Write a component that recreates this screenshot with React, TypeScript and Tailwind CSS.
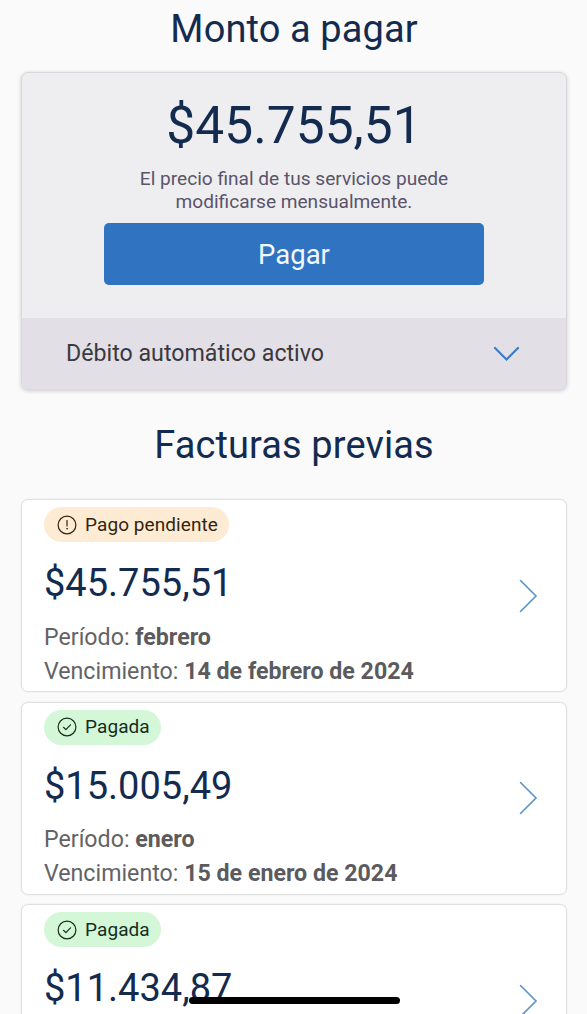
type Status = "pending" | "paid";

interface Invoice {
  status: Status;
  amount: string;
  period?: string;
  due?: string;
}

const invoices: Invoice[] = [
  { status: "pending", amount: "$45.755,51", period: "febrero", due: "14 de febrero de 2024" },
  { status: "paid", amount: "$15.005,49", period: "enero", due: "15 de enero de 2024" },
  { status: "paid", amount: "$11.434,87" },
];

function StatusIcon({ status }: { status: Status }) {
  return (
    <svg
      className="size-5 shrink-0"
      viewBox="0 0 20 20"
      fill="none"
      stroke="currentColor"
      strokeWidth="1.2"
      strokeLinecap="round"
      strokeLinejoin="round"
    >
      <circle cx="10" cy="10" r="8.9" />
      {status === "pending" ? (
        <>
          <path d="M10 5.5v5.4" />
          <circle cx="10" cy="13.7" r="0.5" fill="currentColor" strokeWidth="0.6" />
        </>
      ) : (
        <path d="M6.5 10.3l2.4 2.3 4.6-4.8" />
      )}
    </svg>
  );
}

function StatusBadge({ status }: { status: Status }) {
  const pending = status === "pending";
  return (
    <div
      className={`flex h-[35px] w-fit items-center gap-2 rounded-full pr-[11px] pl-[13px] text-[19px] tracking-[0.08px] ${
        pending ? "bg-[#fdecd3] text-[#33240f]" : "bg-[#d4f7d8] text-[#152d1b]"
      }`}
    >
      <StatusIcon status={status} />
      <span className="pt-px">{pending ? "Pago pendiente" : "Pagada"}</span>
    </div>
  );
}

function InvoiceCard({ invoice }: { invoice: Invoice }) {
  return (
    <article className="flex h-[193px] shrink-0 items-center justify-between rounded-[7px] border border-[#e0e0e1] bg-white pr-[28px] pl-[22px] shadow-[0_0_2px_rgba(0,0,0,0.08)]">
      <div className="h-full pt-[7px]">
        <StatusBadge status={invoice.status} />
        <p className="mt-[19px] text-[38px] leading-[44px] text-[#132b4f]">{invoice.amount}</p>
        <div className="mt-[14.5px] text-[23.2px] leading-[34px] whitespace-nowrap text-[#636366]">
          {invoice.period && (
            <p>
              Período: <strong className="font-bold text-[#5b5b5e]">{invoice.period}</strong>
            </p>
          )}
          {invoice.due && (
            <p>
              Vencimiento: <strong className="font-bold text-[#5b5b5e]">{invoice.due}</strong>
            </p>
          )}
        </div>
      </div>
      <svg className="h-[34px] w-[19px] shrink-0" viewBox="0 0 19 34" fill="none" stroke="#5b93cc" strokeWidth="1.6" strokeLinecap="round">
        <path d="M1.5 1.5L17 17L1.5 32.5" />
      </svg>
    </article>
  );
}

export default function App() {
  return (
    <div className="relative flex h-[1014px] w-[587px] flex-col overflow-hidden bg-[#fafafb] pr-5 pl-[21px] font-[Roboto,sans-serif]">
      <h1 className="mt-[6px] text-center text-[38px] leading-[46px] tracking-[0.1px] text-[#132b4f]">Monto a pagar</h1>

      <section className="mt-5 h-[318px] shrink-0 overflow-hidden rounded-[7px] border border-[#d9d9dc] bg-[#eeeef1] shadow-[0_1px_4px_rgba(0,0,0,0.18)]">
        <div className="flex h-[245px] flex-col items-center pt-[23px]">
          <p className="text-[51.5px] leading-[60px] text-[#132b4f]">$45.755,51</p>
          <p className="mt-[11px] text-center text-[19.1px] leading-[23px] text-[#595469]">
            El precio final de tus servicios puede
            <br />
            modificarse mensualmente.
          </p>
          <button className="mt-[10px] h-[62px] w-[380px] shrink-0 rounded-[5px] bg-[#3073c0] pt-px text-[27.5px] text-[#f3faff]">Pagar</button>
        </div>
        <button className="flex h-[71px] w-full items-center justify-between bg-[#e2e0e6] pr-[46px] pl-[44px] text-[23.2px] text-[#3b383e]">
          <span>Débito automático activo</span>
          <svg className="h-4 w-[27px]" viewBox="0 0 27 16" fill="none" stroke="#3b7cc4" strokeWidth="2.2" strokeLinecap="round">
            <path d="M2 2L13.5 13.5L25 2" />
          </svg>
        </button>
      </section>

      <h2 className="mt-8 text-center text-[38px] leading-[46px] tracking-[0.1px] text-[#132b4f]">Facturas previas</h2>

      <main className="mt-[31px] flex flex-col gap-[9.5px]">
        {invoices.map((invoice) => (
          <InvoiceCard key={invoice.amount} invoice={invoice} />
        ))}
      </main>

      <div className="absolute top-[997px] left-[189px] h-[7px] w-[211px] rounded-full bg-black" />
    </div>
  );
}
